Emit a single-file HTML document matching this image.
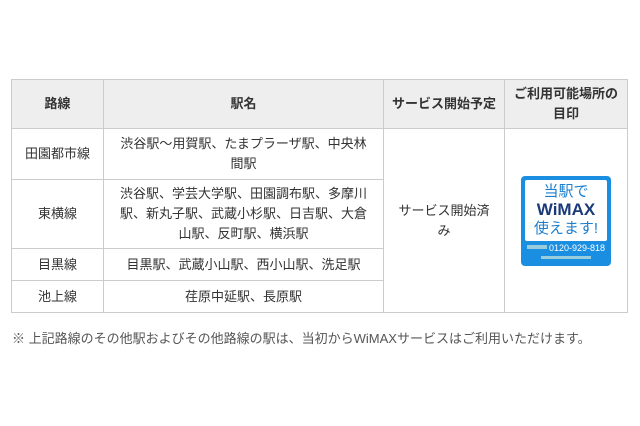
<!DOCTYPE html>
<html><head><meta charset="utf-8"><style>
body{margin:0;background:#fff;width:640px;height:426px;overflow:hidden;font-family:"Liberation Sans","Noto Sans CJK JP",sans-serif;color:#333;font-size:13px}
table{position:absolute;left:11px;top:79px;border-collapse:collapse;width:617px;table-layout:fixed}
td,th{border:1px solid #ccc;text-align:center;vertical-align:middle;padding:0 6px;line-height:20px}
th{background:#eee;font-weight:bold;height:48px;color:#333}
.note{position:absolute;left:12px;top:328px;font-size:13px;color:#555}
.logo{position:relative;width:90px;height:90px;background:#1a8ee0;border-radius:4px;margin:0 auto}
.in{position:absolute;left:4px;top:4px;width:82px;height:61px;background:#fff;border-radius:2px;text-align:center}
</style></head><body>
<table>
<colgroup><col style="width:92px"><col style="width:280px"><col style="width:121px"><col></colgroup>
<tr><th>路線</th><th>駅名</th><th style="padding:0 2px">サービス開始予定</th><th style="padding:0 2px">ご利用可能場所の<br>目印</th></tr>
<tr><td style="height:50px">田園都市線</td><td>渋谷駅～用賀駅、たまプラーザ駅、中央林<br>間駅</td><td rowspan="4" style="padding:0 10px">サービス開始済<br>み</td><td rowspan="4"><div class="logo"><div class="in"><div style="color:#1a7fd0;font-size:15px;line-height:17px;margin-top:3px">当駅で</div><div style="color:#1a3a7a;font-size:17px;font-weight:bold;line-height:19px">WiMAX</div><div style="color:#1a7fd0;font-size:15px;line-height:19px">使えます!</div></div><div style="position:absolute;left:28px;top:67px;color:#fff;font-size:9px;line-height:10px">0120-929-818</div><div style="position:absolute;left:6px;top:69px;width:20px;height:4px;background:#9cd"></div><div style="position:absolute;left:20px;top:80px;width:50px;height:3px;background:#9cd"></div></div></td></tr>
<tr><td style="height:68px">東横線</td><td>渋谷駅、学芸大学駅、田園調布駅、多摩川<br>駅、新丸子駅、武蔵小杉駅、日吉駅、大倉<br>山駅、反町駅、横浜駅</td></tr>
<tr><td style="height:31px">目黒線</td><td>目黒駅、武蔵小山駅、西小山駅、洗足駅</td></tr>
<tr><td style="height:31px">池上線</td><td>荏原中延駅、長原駅</td></tr>
</table>
<div class="note">※ 上記路線のその他駅およびその他路線の駅は、当初からWiMAXサービスはご利用いただけます。</div>
</body></html>
